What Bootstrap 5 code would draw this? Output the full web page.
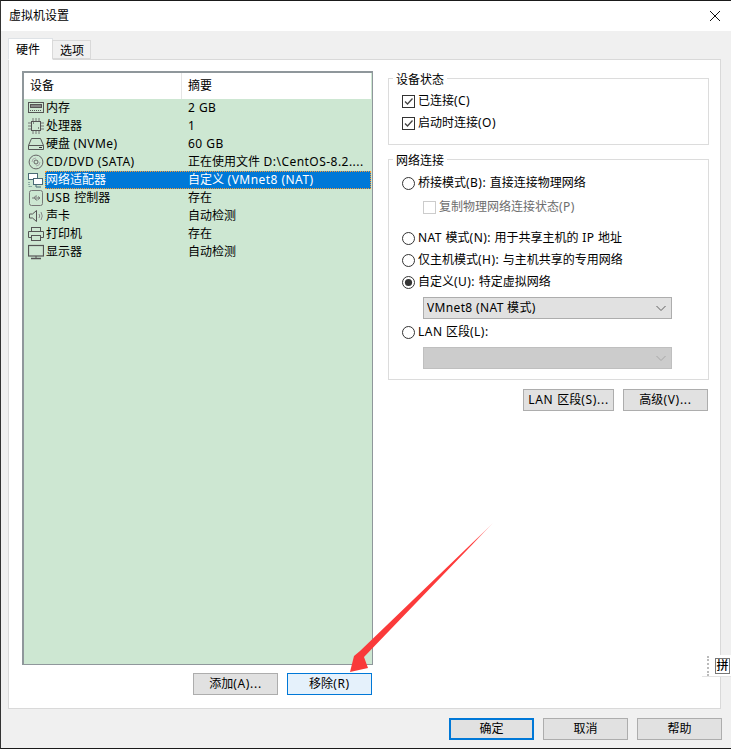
<!DOCTYPE html>
<html lang="zh-CN">
<head>
<meta charset="utf-8">
<title>虚拟机设置</title>
<link href="https://cdn.jsdelivr.net/npm/bootstrap@5.3.0/dist/css/bootstrap.min.css" rel="stylesheet">
<style>
html,body{margin:0;background:#f0f0f0;}
body{font:12px/18px "Noto Sans","Noto Sans CJK SC",sans-serif;color:#000;overflow:hidden;}
.lt{letter-spacing:.46px;}
.vm-window{width:731px;height:749px;display:flex;flex-direction:column;border-top:1px solid #1a1a1a;border-left:1px solid #333;border-bottom:1px solid #1a1a1a;position:relative;background:#f0f0f0;}
.vm-title{height:30px;background:#fff;padding-left:8px;flex:none;}
.vm-title .vm-close{margin-right:10px;}
.vm-body{flex:1;padding:7px 9px 0 7px;display:flex;flex-direction:column;}
.vm-tabs{border:0;height:22px;align-items:flex-end;margin:0;position:relative;z-index:1;}
.vm-tabs .nav-link{border:1px solid #d9d9d9;border-radius:0;background:#f0f0f0;color:#000;font-size:12px;line-height:16px;padding:2px 4px 0 5px;height:19px;margin:0 0 1px -1px;width:39px;text-align:center;}
.vm-tabs .nav-link.active{background:#fff;height:22px;width:45px;border-bottom-color:#fff;margin:0;padding:3px 0 0 7px;text-align:left;}
.vm-panel{height:650px;background:#fff;border:1px solid #d9d9d9;padding:11px 10px 13px 13px;display:flex;gap:15px;margin:-1px 1px 0 0;}
.vm-left{width:351px;display:flex;flex-direction:column;}
.vm-list{height:594px;background:#cde7d2;border:2px solid #8f979b;border-right-width:1px;border-bottom-width:1px;}
.vm-head{height:26px;background:#fff;display:flex;line-height:26px;margin-right:1px;}
.vm-head>div:first-child{padding-left:6px;width:158px;border-right:1px solid #e5e5e5;}
.vm-head>div:last-child{padding-left:6px;}
.vm-row{height:18px;display:flex;line-height:18px;white-space:nowrap;}
.vm-ico{width:21px;padding-left:4px;flex:none;display:flex;align-items:center;}
.vm-ico svg{display:block;}
.vm-name{width:137px;flex:none;padding-left:1px;}
.vm-sum{padding-left:6px;flex:1;}
.vm-row.vm-sel .vm-cells{background:#0078d7;color:#fff;outline:1px dotted #ff9a2e;outline-offset:-1px;}
.vm-cells{display:flex;flex:1;margin-right:1px;}
.vm-actions{display:flex;justify-content:flex-end;gap:9px;margin-top:8px;padding-right:1px;}
.vm-btn{width:85px;height:22px;padding:0;border:1px solid #adadad;border-radius:0;background:#e1e1e1;color:#000;font-size:12px;line-height:18px;}
.vm-btn .lt{letter-spacing:.7px;}
.vm-btn.vm-hot{background:#e5f1fb;border-color:#0078d7;}
.vm-btn.vm-def{border:2px solid #0078d7;}
.vm-btn.vm-wide{width:91px;}
.vm-right{width:321px;padding-top:7px;}
.vm-group{border:1px solid #dcdcdc;position:relative;padding:0 0 0 13px;margin:0;}
.vm-group>legend{float:none;width:auto;margin:0;top:-7px;left:4px;padding:0 3px;font-size:12px;line-height:16px;background:#fff;display:block;height:16px;position:absolute;}
.vm-status{height:67px;padding-top:11px;}
.vm-net{height:221px;margin-top:14px;padding-top:12px;}
.vm-check{display:flex;align-items:center;margin:0;padding:0;min-height:0;height:22px;gap:3px;}
.vm-check .form-check-input{float:none;margin:0;width:13px;height:13px;flex:none;border:1px solid #333;border-radius:0;background-color:#fff;box-shadow:none;opacity:1;}
.vm-check .form-check-input[type=radio]{border-radius:50%;}
.vm-check .form-check-input:checked{background-color:#fff;border-color:#333;}
.vm-check .form-check-input[type=checkbox]:checked{background-size:13px;background-image:url("data:image/svg+xml,<svg xmlns='http://www.w3.org/2000/svg' viewBox='0 0 13 13'><path d='M3 6.5l2.500 2.500 5-5.500' fill='none' stroke='%23444' stroke-width='1.3'/></svg>");}
.vm-check .form-check-input[type=radio]:checked{background-size:13px;background-image:url("data:image/svg+xml,<svg xmlns='http://www.w3.org/2000/svg' viewBox='0 0 13 13'><circle cx='6.5' cy='6.5' r='3.6' fill='%23333'/></svg>");}
.vm-check .form-check-input:disabled{border-color:#ccc;}
.vm-check label{opacity:1!important;}
.vm-sub{margin-left:21px;color:#6d6d6d;height:26px;margin-bottom:7px;}
.vm-select{width:249px;height:22px;margin:4px 0 2px 21px;padding:0 0 0 3px;border:1px solid #adadad;border-radius:0;background-color:#e1e1e1;color:#000;font-size:12px;line-height:18px;letter-spacing:.35px;box-shadow:none;background-position:right 4px center;background-size:12px;background-image:url("data:image/svg+xml,<svg xmlns='http://www.w3.org/2000/svg' viewBox='0 0 12 12'><path d='M1.5 4l4.5 4.5 4.5-4.5' fill='none' stroke='%23606060'/></svg>");}
.vm-select:disabled{background-color:#ccc;border-color:#bfbfbf;background-image:url("data:image/svg+xml,<svg xmlns='http://www.w3.org/2000/svg' viewBox='0 0 12 12'><path d='M1.5 4l4.5 4.5 4.5-4.5' fill='none' stroke='%23a8a8a8'/></svg>");}
.vm-side{display:flex;justify-content:flex-end;gap:9px;margin-top:9px;padding-right:1px;}
.vm-foot{display:flex;justify-content:flex-end;gap:9px;padding-top:9px;}
.vm-arrow{position:absolute;left:0;top:0;pointer-events:none;}
.vm-ime{position:absolute;left:701px;top:654px;width:29px;height:22px;background:#fff;border-bottom:1px solid #e3e3e3;display:flex;align-items:center;}
.vm-dots{width:0;height:20px;border-left:2px dotted #bbb;margin-left:5px;}
.vm-pin{width:15px;height:16px;border:1px solid #777;margin-left:6px;font-size:12px;line-height:14px;text-align:center;font-weight:500;}
</style>
</head>
<body>
<div class="vm-window">
  <div class="vm-title d-flex align-items-center justify-content-between">
    <span>虚拟机设置</span>
    <svg class="vm-close" width="12" height="12" viewBox="0 0 12 12"><path d="M1 1l10 10M11 1L1 11" stroke="#111" fill="none"/></svg>
  </div>
  <div class="vm-body">
    <ul class="nav nav-tabs vm-tabs">
      <li class="nav-item"><a class="nav-link active" href="#">硬件</a></li>
      <li class="nav-item"><a class="nav-link" href="#">选项</a></li>
    </ul>
    <div class="vm-panel">
      <div class="vm-left">
        <div class="vm-list">
          <div class="vm-head"><div>设备</div><div>摘要</div></div>
          <div class="vm-row"><div class="vm-ico"><svg width="16" height="16" viewBox="0 0 16 16" fill="none" stroke="#555"><rect x=".5" y="2.5" width="15" height="10"/><rect x="2.5" y="4.5" width="11" height="3" fill="#888"/><path d="M2 10.5h12" stroke-dasharray="1 1"/></svg></div><div class="vm-cells"><div class="vm-name">内存</div><div class="vm-sum"><span class="lt">2 GB</span></div></div></div>
          <div class="vm-row"><div class="vm-ico"><svg width="16" height="16" viewBox="0 0 16 16" fill="none" stroke="#555"><rect x="3.5" y="3.5" width="9" height="9"/><path d="M0 5h3M0 8h3M0 11h3M13 5h3M13 8h3M13 11h3M5 0v3M8 0v3M11 0v3M5 13v3M8 13v3M11 13v3" stroke="#777"/><path d="M5 5h1M10 10h1" stroke="#333"/></svg></div><div class="vm-cells"><div class="vm-name">处理器</div><div class="vm-sum">1</div></div></div>
          <div class="vm-row"><div class="vm-ico"><svg width="16" height="16" viewBox="0 0 16 16" fill="none" stroke="#555"><path d="M3.5 2.5h9l3 7v4H.5v-4z"/><path d="M.5 9.5h15"/><path d="M11 11.5h3" stroke="#333"/></svg></div><div class="vm-cells"><div class="vm-name">硬盘<span class="lt"> (NVMe)</span></div><div class="vm-sum"><span class="lt">60 GB</span></div></div></div>
          <div class="vm-row"><div class="vm-ico"><svg width="16" height="16" viewBox="0 0 16 16" fill="none" stroke="#666"><circle cx="8" cy="8" r="6.9"/><circle cx="8" cy="8" r="2"/><path d="M4 8a4 4 0 0 1 4-4M12 8a4 4 0 0 1-4 4" stroke="#aaa"/></svg></div><div class="vm-cells"><div class="vm-name"><span class="lt">CD/DVD (SATA)</span></div><div class="vm-sum">正在使用文件<span class="lt"> D:\CentOS-8.2....</span></div></div></div>
          <div class="vm-row vm-sel"><div class="vm-ico"><svg width="16" height="16" viewBox="0 0 16 16" fill="none" stroke="#4a6a75"><rect x=".5" y="1.5" width="9" height="6" fill="#fff"/><rect x="5.5" y="6.5" width="9" height="6" fill="#fff"/><path d="M1 10v4.500h3" stroke-dasharray="1 1"/><path d="M8 13v2h5"/></svg></div><div class="vm-cells"><div class="vm-name">网络适配器</div><div class="vm-sum">自定义<span class="lt"> (VMnet8 (NAT)</span></div></div></div>
          <div class="vm-row"><div class="vm-ico"><svg width="16" height="16" viewBox="0 0 16 16" fill="none" stroke="#777"><rect x="1.500" y=".5" width="13" height="15" rx="2"/><path d="M4 8h8M10 6.500l2 1.500-2 1.500M6 8l1.500-2H9M6.500 8l1.500 2h1.500"/></svg></div><div class="vm-cells"><div class="vm-name"><span class="lt">USB </span>控制器</div><div class="vm-sum">存在</div></div></div>
          <div class="vm-row"><div class="vm-ico"><svg width="16" height="16" viewBox="0 0 16 16" fill="none" stroke="#555"><path d="M1.500 6h3l4-3.500v11l-4-3.500h-3z"/><path d="M11 6q1.500 2 0 4M13 4q2.500 4 0 8" stroke="#888"/></svg></div><div class="vm-cells"><div class="vm-name">声卡</div><div class="vm-sum">自动检测</div></div></div>
          <div class="vm-row"><div class="vm-ico"><svg width="16" height="16" viewBox="0 0 16 16" fill="none" stroke="#555"><rect x="3.500" y="1.500" width="9" height="4"/><path d="M3.500 11.500h-3v-6h15v6h-3"/><rect x="3.500" y="9.500" width="9" height="5"/></svg></div><div class="vm-cells"><div class="vm-name">打印机</div><div class="vm-sum">存在</div></div></div>
          <div class="vm-row"><div class="vm-ico"><svg width="16" height="16" viewBox="0 0 16 16" fill="none" stroke="#555"><rect x=".5" y="1.500" width="15" height="10.500" stroke-width="1.200"/><path d="M3 14.500h10" stroke-width="1.500"/><path d="M8 12v2"/></svg></div><div class="vm-cells"><div class="vm-name">显示器</div><div class="vm-sum">自动检测</div></div></div>
        </div>
        <div class="vm-actions">
          <button type="button" class="btn vm-btn">添加<span class="lt">(A)...</span></button>
          <button type="button" class="btn vm-btn vm-hot">移除<span class="lt">(R)</span></button>
        </div>
      </div>
      <div class="vm-right">
        <fieldset class="vm-group vm-status">
          <legend>设备状态</legend>
          <div class="form-check vm-check"><input class="form-check-input" type="checkbox" id="c1" checked><label class="form-check-label" for="c1">已连接<span class="lt">(C)</span></label></div>
          <div class="form-check vm-check"><input class="form-check-input" type="checkbox" id="c2" checked><label class="form-check-label" for="c2">启动时连接<span class="lt">(O)</span></label></div>
        </fieldset>
        <fieldset class="vm-group vm-net">
          <legend>网络连接</legend>
          <div class="form-check vm-check"><input class="form-check-input" type="radio" name="n" id="r1"><label class="form-check-label" for="r1">桥接模式<span class="lt">(B): </span>直接连接物理网络</label></div>
          <div class="form-check vm-check vm-sub"><input class="form-check-input" type="checkbox" id="c3" disabled><label class="form-check-label" for="c3">复制物理网络连接状态<span class="lt">(P)</span></label></div>
          <div class="form-check vm-check"><input class="form-check-input" type="radio" name="n" id="r2"><label class="form-check-label" for="r2"><span class="lt">NAT </span>模式<span class="lt">(N): </span>用于共享主机的<span class="lt"> IP </span>地址</label></div>
          <div class="form-check vm-check"><input class="form-check-input" type="radio" name="n" id="r3"><label class="form-check-label" for="r3">仅主机模式<span class="lt">(H): </span>与主机共享的专用网络</label></div>
          <div class="form-check vm-check"><input class="form-check-input" type="radio" name="n" id="r4" checked><label class="form-check-label" for="r4">自定义<span class="lt">(U): </span>特定虚拟网络</label></div>
          <select class="form-select vm-select"><option>VMnet8 (NAT 模式)</option></select>
          <div class="form-check vm-check"><input class="form-check-input" type="radio" name="n" id="r5"><label class="form-check-label" for="r5"><span class="lt">LAN </span>区段<span class="lt">(L):</span></label></div>
          <select class="form-select vm-select" disabled><option></option></select>
        </fieldset>
        <div class="vm-side">
          <button type="button" class="btn vm-btn vm-wide"><span class="lt">LAN </span>区段<span class="lt">(S)...</span></button>
          <button type="button" class="btn vm-btn">高级<span class="lt">(V)...</span></button>
        </div>
      </div>
    </div>
    <div class="vm-foot">
      <button type="button" class="btn vm-btn vm-def">确定</button>
      <button type="button" class="btn vm-btn">取消</button>
      <button type="button" class="btn vm-btn">帮助</button>
    </div>
  </div>
  <div class="vm-ime"><div class="vm-dots"></div><div class="vm-pin">拼</div></div>
</div>
<svg class="vm-arrow" width="731" height="749" viewBox="0 0 731 749">
  <defs><linearGradient id="ag" x1="493" y1="523" x2="360" y2="660" gradientUnits="userSpaceOnUse"><stop offset="0" stop-color="#ff3b3b" stop-opacity=".3"/><stop offset=".15" stop-color="#ff3b3b"/><stop offset="1" stop-color="#f93a3a"/></linearGradient></defs>
  <polygon points="493,523 364,657 368,668 350,672 354,656 360,651" fill="url(#ag)"/>
</svg>
</body>
</html>
